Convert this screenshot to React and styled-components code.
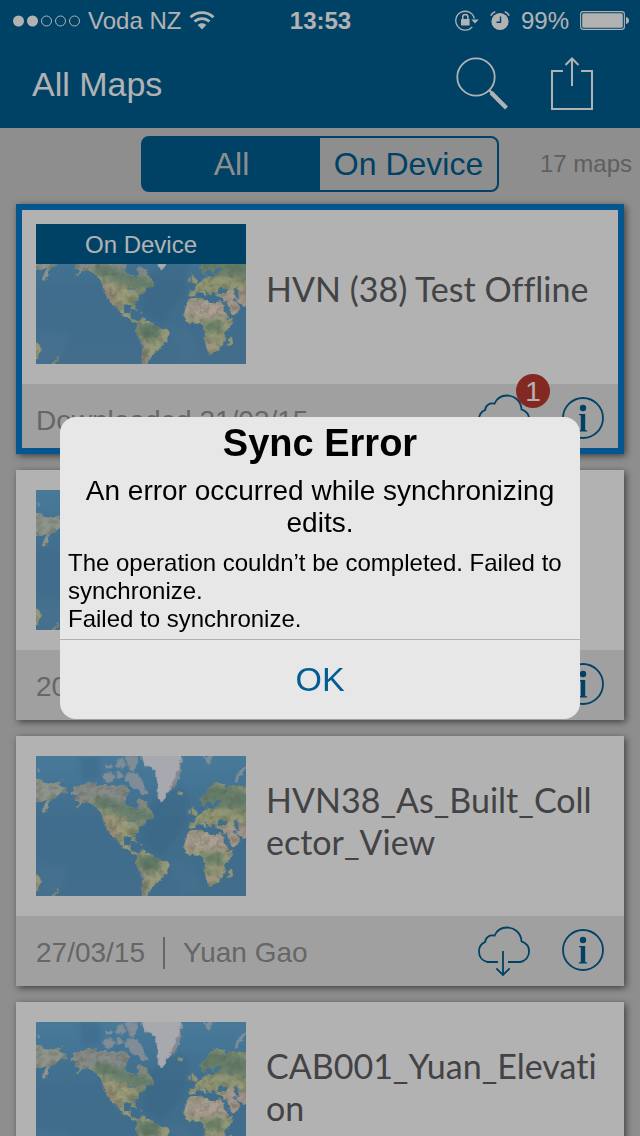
import React, { useId } from "react";
import styled, { createGlobalStyle, css } from "styled-components";

const sans = '"Liberation Sans", Arial, sans-serif';
const humanist = 'Lato, "Open Sans", sans-serif';
const blue = "#005e92";

const GlobalStyle = createGlobalStyle`
  *, *::before, *::after { box-sizing: border-box; }
  body { margin: 0; background: #cccccc; font-family: ${sans}; }
  h1, h2, h3, p { margin: 0; font-weight: 400; }
  button { margin: 0; padding: 0; border: 0; background: none; font: inherit; color: inherit; cursor: pointer; }
  svg { display: block; }
`;

const Screen = styled.div`
  display: flex;
  flex-direction: column;
  height: 100vh;
  overflow: hidden;
`;

const StatusBar = styled.div`
  display: grid;
  grid-template-columns: 1fr auto 1fr;
  align-items: center;
  height: 40px;
  flex: none;
  padding: 2px 11px 0 12px;
  background: ${blue};
  color: #fff;
  font-size: 24px;
  line-height: 38px;
`;

const StatusGroup = styled.div`
  display: flex;
  align-items: center;
  gap: ${(p) => p.$gap}px;
  justify-content: ${(p) => (p.$end ? "flex-end" : "flex-start")};
`;

const Clock = styled.time`
  font-weight: 700;
`;

const NavBar = styled.header`
  display: flex;
  align-items: center;
  justify-content: space-between;
  height: 88px;
  flex: none;
  padding: 0 47px 0 32px;
  background: ${blue};
  color: #fff;
`;

const NavTitle = styled.h1`
  font-size: 34px;
  line-height: 40px;
`;

const NavActions = styled.div`
  display: flex;
  align-items: center;
  gap: 43px;
`;

const FilterBar = styled.div`
  display: grid;
  grid-template-columns: 1fr 358px 1fr;
  align-items: center;
  height: 72px;
  flex: none;
  padding: 0 8px;
`;

const Segmented = styled.div`
  grid-column: 2;
  display: grid;
  grid-template-columns: 1fr 1fr;
  height: 56px;
  border: 2px solid ${blue};
  border-radius: 8px;
  background: linear-gradient(to right, ${blue} 50%, transparent 50%);
`;

const Segment = styled.button`
  font-size: 32px;
  line-height: 52px;
  color: ${(p) => (p.$active ? "#cccccc" : blue)};
`;

const MapCount = styled.span`
  justify-self: end;
  font-size: 24px;
  color: #888;
`;

const MapList = styled.main`
  display: flex;
  flex-direction: column;
  gap: 16px;
  padding: 4px 16px 16px;
`;

const Card = styled.article`
  flex: none;
  background: #fff;
  box-shadow: 2px 2px 7px rgba(0, 0, 0, 0.55);
  ${(p) =>
    p.$selected &&
    css`
      outline: 6px solid #087bcc;
      outline-offset: -6px;
    `}
`;

const CardBody = styled.div`
  display: flex;
  align-items: center;
  gap: 20px;
  padding: 20px;
`;

const Thumb = styled.div`
  position: relative;
  flex: none;
  width: 210px;
  height: 140px;
  overflow: hidden;
`;

const Banner = styled.span`
  position: absolute;
  inset: 0 0 auto;
  height: 40px;
  background: ${blue};
  color: #fff;
  font-size: 24px;
  line-height: 42px;
  text-align: center;
`;

const CardTitle = styled.h2`
  flex: 1;
  font-family: ${humanist};
  font-size: 34px;
  line-height: 42px;
  font-variant-ligatures: none;
  padding-bottom: 10px;
  color: #606163;
  white-space: pre-line;
`;

const CardFooter = styled.footer`
  display: flex;
  align-items: center;
  justify-content: space-between;
  height: 70px;
  padding: 0 20px;
  background: #e6e6e6;
`;

const Meta = styled.p`
  display: flex;
  align-items: center;
  gap: 18px;
  padding-top: 4px;
  font-size: 28px;
  line-height: 32px;
  color: #929292;
`;

const Separator = styled.span`
  width: 2px;
  height: 32px;
  background: #929292;
`;

const CardActions = styled.div`
  display: flex;
  align-items: center;
  gap: 32px;
  color: ${blue};
`;

const IconButton = styled.button`
  position: relative;
`;

const Badge = styled.span`
  position: absolute;
  top: -20px;
  right: -20px;
  width: 34px;
  height: 34px;
  border-radius: 50%;
  background: #be3a31;
  color: #fff;
  font-size: 28px;
  line-height: 36px;
  text-align: center;
`;

const Backdrop = styled.div`
  position: fixed;
  inset: 0;
  display: flex;
  align-items: center;
  justify-content: center;
  padding: 0 60px;
  background: rgba(0, 0, 0, 0.3);
`;

const Dialog = styled.section`
  width: 100%;
  max-width: 520px;
  border-radius: 16px;
  overflow: hidden;
  background: #e7e7e7;
  color: #000;
`;

const DialogTitle = styled.h2`
  font-size: 38px;
  font-weight: 700;
  line-height: 52px;
  text-align: center;
`;

const DialogMessage = styled.p`
  padding: 6px 8px 0;
  font-size: 28px;
  line-height: 32px;
  text-align: center;
`;

const DialogDetail = styled.p`
  padding: 10px 4px 6px 8px;
  font-size: 24px;
  line-height: 28px;
  white-space: pre-line;
`;

const DialogButton = styled.button`
  display: block;
  width: 100%;
  height: 80px;
  border-top: 1px solid #b0b0b0;
  font-size: 34px;
  color: ${blue};
`;

function SignalDots() {
  return (
    <svg width="68" height="12" viewBox="0 0 68 12" fill="none" stroke="#fff" aria-hidden="true">
      <circle cx="6.5" cy="6" r="5.5" fill="#fff" stroke="none" />
      <circle cx="20.5" cy="6" r="5.5" fill="#fff" stroke="none" />
      <circle cx="34.5" cy="6" r="5" />
      <circle cx="48.5" cy="6" r="5" />
      <circle cx="62.5" cy="6" r="5" />
    </svg>
  );
}

function WifiIcon() {
  return (
    <svg width="26" height="20" viewBox="0 0 26 20" fill="none" stroke="#fff" strokeWidth="2.8" aria-label="Wi-Fi">
      <path d="M1.5 6.200C8 0 18 0 24.500 6.200" />
      <path d="M5.500 10.600C9.700 6.600 16.300 6.600 20.500 10.600" />
      <path d="M13 18.500L8.700 14C11 11.800 15 11.800 17.300 14Z" fill="#fff" stroke="none" />
    </svg>
  );
}

function RotationLockIcon() {
  return (
    <svg width="24" height="22" viewBox="0 0 24 22" fill="none" stroke="#fff" strokeWidth="1.300" aria-label="Rotation lock">
      <path d="M19.300 8.500A9.400 9.400 0 1 0 17.300 16.800" />
      <path d="M16.300 9.500h7.400l-3.700 4z" fill="#fff" stroke="none" />
      <rect x="6" y="9" width="8.600" height="6.500" rx=".6" fill="#fff" stroke="none" />
      <path d="M7.700 9.500V7a2.600 2.600 0 0 1 5.200 0V9.500" strokeWidth="1.500" />
    </svg>
  );
}

function AlarmIcon() {
  return (
    <svg width="20" height="20" viewBox="0 0 20 20" fill="none" aria-label="Alarm">
      <circle cx="10" cy="10.500" r="8.600" fill="#fff" />
      <path d="M.8 4.700A8 8 0 0 1 5.200 .8M14.800 .8A8 8 0 0 1 19.200 4.700" stroke="#fff" strokeWidth="1.600" />
      <path d="M10.500 5.500v5.800H6.500" stroke={blue} strokeWidth="1.400" />
    </svg>
  );
}

function BatteryIcon() {
  return (
    <svg width="49" height="20" viewBox="0 0 49 20" fill="none" aria-label="Battery">
      <rect x=".6" y=".6" width="43.800" height="17.800" rx="2.600" stroke="#fff" strokeWidth="1.100" />
      <rect x="2.200" y="2.200" width="40.600" height="14.600" rx="1.500" fill="#fff" />
      <path d="M46 6c2 .4 3 1.600 3 3.500s-1 3.100-3 3.500z" fill="#fff" />
    </svg>
  );
}

function SearchIcon() {
  return (
    <svg width="52" height="54" viewBox="0 0 52 54" fill="none" stroke="#fff" aria-hidden="true">
      <circle cx="20" cy="20" r="18.700" strokeWidth="1.800" />
      <path d="M33 33l3.500 3.500" strokeWidth="2.400" />
      <path d="M35 35.500L50.500 51" strokeWidth="4.400" />
    </svg>
  );
}

function ShareIcon() {
  return (
    <svg width="42" height="54" viewBox="0 0 42 54" fill="none" stroke="#fff" strokeWidth="2" aria-hidden="true">
      <path d="M12 14H1v38h40V14H30" />
      <path d="M21 29V2M14.500 8L21 1.500 27.500 8" />
    </svg>
  );
}

function CloudDownloadIcon() {
  return (
    <svg width="52" height="50" viewBox="0 0 52 50" fill="none" stroke="currentColor" strokeWidth="1.800" aria-hidden="true">
      <path d="M20 36H9.500C4.500 35 1 31 1 25.500c0-4.600 2.400-8 6.200-9.600C7.400 11.500 11.500 8.500 16.500 9.700 18.700 4.500 23.500 1.500 29 1.500c8 0 14.200 6 14.500 13.800 4.500 1.600 7.600 5.400 7.600 10 0 5.700-3.800 10-9 10.700H30" />
      <path d="M25 25v24M18.300 42.300L25 49l6.700-6.700" />
    </svg>
  );
}

function InfoIcon() {
  return (
    <svg width="42" height="44" viewBox="0 0 42 44" fill="currentColor" aria-hidden="true">
      <circle cx="21" cy="21" r="20" fill="none" stroke="currentColor" strokeWidth="1.800" />
      <circle cx="21" cy="11" r="3.200" />
      <path d="M17 17h6.200v16l2 .6V34.500h-8.400v-.9l2-.6V18.500l-1.800-.5z" />
    </svg>
  );
}

const LAND = [
  /* eastern Siberia and Kamchatka */
  "M-10 72L10 74 24 80 45 85 66 78 76 88 92 98 95 110 80 112 60 122 45 130 38 148 28 172 20 165 24 148 36 132 20 135-10 144Z",
  /* North and Central America */
  "M107 112L112 96 137 86 162 80 197 86 232 92 258 84 282 104 270 124 268 140 276 150 296 156 302 168 308 150 302 136 308 126 325 130 334 150 348 168 356 186 332 192 326 206 308 214 306 228 292 238 297 252 290 252 284 242 266 244 259 256 266 270 280 264 286 268 284 278 302 290 316 292 306 298 284 288 256 272 246 250 234 234 240 252 228 240 216 222 204 208 200 184 190 164 176 148 158 138 140 144 118 154 130 140 116 132 124 120Z",
  /* South America */
  "M304 292L317 282 342 290 362 307 397 320 399 334 388 358 368 376 356 390 342 402 332 424 316 424 320 382 318 354 300 328 298 308Z",
  /* Africa */
  "M442 274L452 244 464 226 502 220 508 230 532 236 557 232 566 262 578 286 594 284 582 310 566 328 568 350 554 366 544 382 522 392 512 376 506 352 506 320 498 302 474 298 450 290Z",
  /* Europe and western Asia */
  "M458 218L460 202 478 200 474 188 488 178 500 166 512 164 508 150 516 158 528 156 548 148 556 132 544 130 530 150 522 138 508 146 494 150 490 134 508 112 530 84 546 78 568 84 570 96 586 90 610 92 640 84 640 250 620 244 608 240 598 226 590 222 604 242 612 254 600 268 584 278 574 264 562 236 564 222 540 216 538 202 530 206 524 220 512 200 498 194 514 214 502 214 488 200 474 216Z",
  /* Britain and Ireland */
  "M468 148L476 152 482 168 480 176 466 176 470 164ZM456 162L464 160 462 172 454 172Z",
  /* Iceland */
  "M424 108L442 104 446 114 436 122 426 116Z",
  /* Madagascar, New Zealand, Australia, Cuba, Hispaniola */
  "M578 346L588 340 584 364 574 366Z",
  "M62 396L68 398 64 410 52 420 46 420 60 408Z",
  "M-6 352L8 360 14 372 8 392-6 410Z",
  "M288 250L306 262 300 262 286 254ZM310 262L322 266 314 270Z",
];

const ICE = [
  "M317-8L325 28 343 32 357 52 365 82 362 102 368 124 378 138 386 128 392 107 412 94 428 76 432 42 438-8Z",
  "M200 52L222 50 238 62 232 76 212 82 200 66Z",
  "M205 30L222 22 230 34 214 40Z",
  "M240 14L262 10 272 28 256 38 242 30Z",
  "M268 0L304-4 308 22 290 44 276 32Z",
  "M236 48L258 46 262 64 246 70Z",
  "M264 58L288 48 312 62 326 88 336 112 318 118 302 100 282 88 270 74Z",
  "M504 4L532 0 526 16 518 30 510 20Z",
  "M596 76L604 50 630 30 630 40 610 62 602 80Z",
  "M2 42L14 46 6 50ZM72 70L80 72 76 78Z",
];

function WorldMap() {
  const id = useId().replace(/[^a-zA-Z0-9]/g, "");
  const ref = (name) => `url(#${name}${id})`;
  return (
    <svg width="210" height="140" viewBox="0 0 630 420" role="img" aria-label="World map">
      <defs>
        <linearGradient id={`sea${id}`} x1="0" y1="0" x2="0" y2="1">
          <stop offset="0" stopColor="#68afdc" />
          <stop offset=".45" stopColor="#5c9dca" />
          <stop offset="1" stopColor="#5f9dc8" />
        </linearGradient>
        <filter id={`coast${id}`} x="0" y="0" width="630" height="420" filterUnits="userSpaceOnUse" colorInterpolationFilters="sRGB">
          <feTurbulence type="fractalNoise" baseFrequency=".06" numOctaves="3" seed="4" result="n" />
          <feDisplacementMap in="SourceGraphic" in2="n" scale="18" xChannelSelector="R" yChannelSelector="G" />
        </filter>
        <filter id={`soft${id}`} x="-30%" y="-30%" width="160%" height="160%" colorInterpolationFilters="sRGB">
          <feGaussianBlur stdDeviation="8" />
        </filter>
        <filter id={`grain${id}`} x="0" y="0" width="100%" height="100%" colorInterpolationFilters="sRGB">
          <feTurbulence type="fractalNoise" baseFrequency=".05" numOctaves="4" seed="9" />
          <feColorMatrix values="0 0 0 0 .5  0 0 0 0 .55  0 0 0 0 .45  0 2.500 0 0 -1" />
        </filter>
        <clipPath id={`land${id}`}>
          {LAND.map((d) => (
            <path key={d} d={d} />
          ))}
        </clipPath>
      </defs>
      <rect width="630" height="420" fill={ref("sea")} />
      <g filter={ref("soft")}>
        <path d="M130 0h60v60l-50 10z" fill="#4f8fbb" opacity=".4" />
        <path d="M340 150l70-60 50 20-20 100-60 90-60-40z" fill="#4f8db8" opacity=".35" />
        <path d="M400 300l60 20 40 80-60 20z" fill="#6aa5cf" opacity=".4" />
        <path d="M0 320l100 10-30 90H0z" fill="#6aa5cf" opacity=".5" />
      </g>
      <path d="M30 165Q70 185 100 168T135 145M85 355L65 410" fill="none" stroke="#7aa9bd" strokeWidth="3" opacity=".5" />
      <g filter={ref("coast")}>
        <g clipPath={ref("land")}>
          <rect x="-10" y="-10" width="650" height="440" fill="#d6dbae" />
          <g filter={ref("soft")}>
            <path d="M-10 60H100v60L40 180H-10z" fill="#ccd3c8" />
            <path d="M100 60H340l20 90-80 10-100-30-80 30z" fill="#c3c9c6" />
            <path d="M175 116l90 24 95 30-10 30-60-6-90-34-30-10z" fill="#93b79d" />
            <path d="M216 166l70 24-20 50-30 20-36-50z" fill="#e2dfb0" />
            <path d="M198 180l20 10 30 70-20-4-26-40z" fill="#d3bfa8" />
            <path d="M300 200l-30 40 30-6z" fill="#b4c69a" />
            <path d="M306 300l50-2 20 20-10 26-40 6-20-24z" fill="#88b096" />
            <path d="M306 340l16 10 6 80h-18z" fill="#c6b5b3" />
            <path d="M440 230l130-6 14 54-64 8-80-4z" fill="#f6e3d2" />
            <path d="M500 296l56-2 6 26-56 4z" fill="#96ba98" />
            <path d="M506 360l40 0-20 36z" fill="#e6d5bb" />
            <path d="M490 84l100 6 50 24v50l-90-10-60 10z" fill="#93b599" />
            <path d="M460 176l120-10 60 10v20H460z" fill="#cfd5a2" />
            <path d="M560 212l80-24v70l-60 26z" fill="#f0d9ca" />
          </g>
          <rect width="630" height="420" filter={ref("grain")} opacity=".5" />
        </g>
        <g fill="#cdd2da">
          {ICE.slice(1).map((d) => (
            <path key={d} d={d} opacity=".8" />
          ))}
        </g>
        <path d={ICE[0]} fill="#f0f2fa" />
        <path d="M420 100L434 42 438 0 430 30 418 66 400 94Z" fill="#b0b8c4" opacity=".8" />
        <g fill="#5f9fc9">
          <path d="M542 198l6-10 14 2 14 12-10 6-20-2z" />
          <path d="M594 192l10-4 2 18 4 20-8 2-6-18z" />
          <path d="M276 192l16-2 8 8-14 2z" opacity=".6" />
          <path d="M240 96l18 4-6 5zM212 88l12 14-8-2z" opacity=".6" />
          <path d="M562 234l6-2 14 26 6 20-6 2-12-22z" />
        </g>
      </g>
    </svg>
  );
}

const maps = [
  { id: 1, title: "HVN (38) Test Offline", onDevice: true, meta: ["Downloaded 31/03/15"], pending: 1 },
  { id: 2, title: "", meta: ["20/03/15"] },
  { id: 3, title: "HVN38_As_Built_Coll\nector_View", meta: ["27/03/15", "Yuan Gao"] },
  { id: 4, title: "CAB001_Yuan_Elevati\non", meta: ["27/03/15", "Yuan Gao"] },
];

function MapCard({ map }) {
  return (
    <Card $selected={map.onDevice}>
      <CardBody>
        <Thumb>
          <WorldMap />
          {map.onDevice && <Banner>On Device</Banner>}
        </Thumb>
        {map.title && <CardTitle>{map.title}</CardTitle>}
      </CardBody>
      <CardFooter>
        <Meta>
          <span>{map.meta[0]}</span>
          {map.meta[1] && <Separator />}
          {map.meta[1] && <span>{map.meta[1]}</span>}
        </Meta>
        <CardActions>
          <IconButton aria-label="Sync or download">
            <CloudDownloadIcon />
            {map.pending && <Badge>{map.pending}</Badge>}
          </IconButton>
          <IconButton aria-label="Map details">
            <InfoIcon />
          </IconButton>
        </CardActions>
      </CardFooter>
    </Card>
  );
}

export default function App() {
  return (
    <>
      <GlobalStyle />
      <Screen>
        <StatusBar>
          <StatusGroup $gap={8}>
            <SignalDots />
            <span>Voda NZ</span>
            <WifiIcon />
          </StatusGroup>
          <Clock>13:53</Clock>
          <StatusGroup $gap={11} $end>
            <RotationLockIcon />
            <AlarmIcon />
            <span>99%</span>
            <BatteryIcon />
          </StatusGroup>
        </StatusBar>
        <NavBar>
          <NavTitle>All Maps</NavTitle>
          <NavActions>
            <IconButton aria-label="Search">
              <SearchIcon />
            </IconButton>
            <IconButton aria-label="Share">
              <ShareIcon />
            </IconButton>
          </NavActions>
        </NavBar>
        <FilterBar>
          <Segmented role="group" aria-label="Filter maps">
            <Segment $active aria-pressed="true">All</Segment>
            <Segment aria-pressed="false">On Device</Segment>
          </Segmented>
          <MapCount>17 maps</MapCount>
        </FilterBar>
        <MapList>
          {maps.map((m) => (
            <MapCard key={m.id} map={m} />
          ))}
        </MapList>
      </Screen>
      <Backdrop>
        <Dialog role="alertdialog" aria-modal="true" aria-labelledby="alert-title" aria-describedby="alert-message">
          <DialogTitle id="alert-title">Sync Error</DialogTitle>
          <DialogMessage id="alert-message">An error occurred while synchronizing edits.</DialogMessage>
          <DialogDetail>
            {"The operation couldn’t be completed. Failed to synchronize.\nFailed to synchronize."}
          </DialogDetail>
          <DialogButton>OK</DialogButton>
        </Dialog>
      </Backdrop>
    </>
  );
}
